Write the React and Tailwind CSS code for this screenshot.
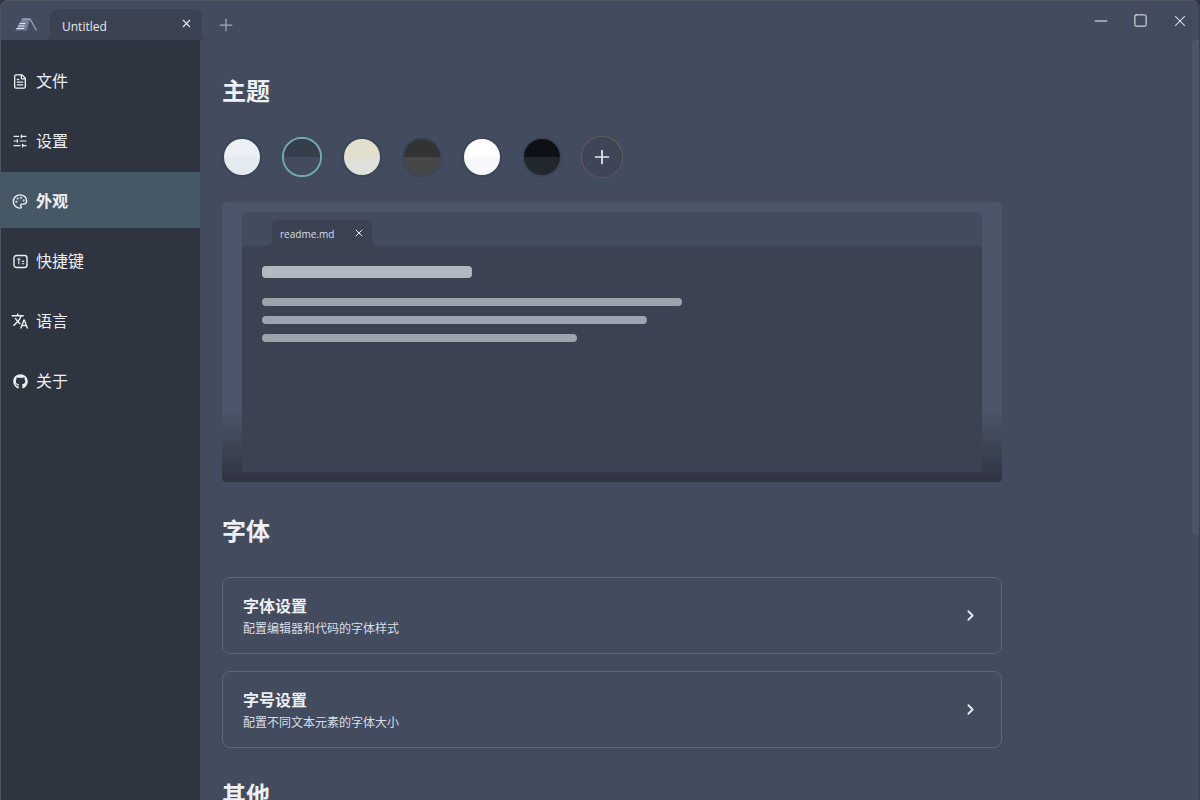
import React from 'react';
import { FileText, SlidersHorizontal, Palette, ChevronRight, X, Plus, Minus, Square } from 'lucide-react';
import { FaGithub } from 'react-icons/fa';
import { MdTranslate } from 'react-icons/md';

const cjk = "font-['Open_Sans','Noto_Sans_CJK_SC',sans-serif]";

function ShortcutIcon() {
  return (
    <svg width="15" height="15" viewBox="0 0 15 15" fill="none" stroke="currentColor" strokeWidth="1.4" className="shrink-0">
      <rect x="1" y="1.5" width="13" height="12" rx="2.5" />
      <path d="M4 5h3.6M5.8 5v5.2M8.8 7.4h2.4M8.8 9.8h2.4" strokeWidth="1.1" />
    </svg>
  );
}

const navItems = [
  { label: '文件', icon: <FileText size={17} strokeWidth={2} /> },
  { label: '设置', icon: <SlidersHorizontal size={18} strokeWidth={1.8} /> },
  { label: '外观', icon: <Palette size={17} strokeWidth={2.1} />, active: true },
  { label: '快捷键', icon: <ShortcutIcon /> },
  { label: '语言', icon: <MdTranslate size={18} className="shrink-0" /> },
  { label: '关于', icon: <FaGithub size={15} className="shrink-0" /> },
];

const themes = [
  { top: 'bg-[#eceff4]', bottom: 'bg-[#e5e9f0]', ring: 'border-[#3a4558]' },
  { top: 'bg-[#363d4b]', bottom: 'bg-[#434c5e]', ring: 'border-[#75a9b4]' },
  { top: 'bg-[#e0e0cc]', bottom: 'bg-[#e0e0da]', ring: 'border-[#3a4558]' },
  { top: 'bg-[#333333]', bottom: 'bg-[#474747]', ring: 'border-[#3a4558]' },
  { top: 'bg-[#ffffff]', bottom: 'bg-[#f6f8fa]', ring: 'border-[#3a4558]' },
  { top: 'bg-[#0d1117]', bottom: 'bg-[#22272e]', ring: 'border-[#3a4558]' },
];

function Heading({ children, className }) {
  return <h2 className={`text-2xl font-bold leading-8 text-[#eceff4] ${className}`}>{children}</h2>;
}

function SettingCard({ title, desc }) {
  return (
    <div className="flex h-[77px] items-center justify-between rounded-lg border border-[#5a6680] pl-5 pr-[22px]">
      <div className="mt-[2px]">
        <div className="text-base leading-5 font-bold text-[#eceff4]">{title}</div>
        <div className="mt-[5px] text-xs leading-4 text-[#d8dee9]">{desc}</div>
      </div>
      <ChevronRight size={17} strokeWidth={2.6} className="text-[#e5e9f0]" />
    </div>
  );
}

// concave foot on either side of a tab
function TabFlares() {
  return (
    <>
      <span className="absolute bottom-0 left-[-6px] h-[6px] w-[6px] bg-[radial-gradient(circle_at_0_0,transparent_6px,#3b4252_6.5px)]" />
      <span className="absolute bottom-0 right-[-6px] h-[6px] w-[6px] bg-[radial-gradient(circle_at_100%_0,transparent_6px,#3b4252_6.5px)]" />
    </>
  );
}

export default function App() {
  return (
    <div className="h-screen bg-[#30343c]">
      <div className={`flex h-full flex-col overflow-hidden rounded-t-lg border-t border-r border-l border-[#4f5561] border-r-[#3a404d] bg-[#434c5e] ${cjk}`}>
        <div className="flex h-[39px] shrink-0 items-end">
          <div className="flex h-[39px] w-[49px] items-center justify-center">
            <svg width="24" height="14" viewBox="0 0 24 14" fill="none" className="mt-[8px] ml-[1px]">
              <path d="M8 1 1 12.5h11.5L16 1z" fill="#8fa3bf" opacity="0.6" />
              <path d="M5.5 5.5h6M4 8h6.5M2.5 10.5h7.5" stroke="#dfe6f0" strokeWidth="1.1" />
              <path d="M8 1h8l6.5 11.5" stroke="#8fa3bf" strokeWidth="1.3" />
            </svg>
          </div>
          <div className="relative flex h-[31px] w-[152px] items-center justify-between rounded-t-lg bg-[#3b4252] pl-3 pr-[9px] text-xs text-[#e5e9f0]">
            <TabFlares />
            <span className="pt-1">Untitled</span>
            <X size={13} strokeWidth={2} className="mt-[-2px] text-[#e5e9f0]" />
          </div>
          <div className="flex h-[39px] w-12 items-center justify-center">
            <Plus size={20} strokeWidth={1.5} className="mt-[9px] text-[#a3abb9]" />
          </div>
          <div className="flex-1" />
          <div className="flex h-[39px] items-center gap-[20px] pr-[10px] text-[#eef1f6]">
            <Minus size={20} strokeWidth={1.2} />
            <Square size={15} strokeWidth={1.6} className="mx-[2px]" />
            <X size={18} strokeWidth={1.4} className="ml-[1px]" />
          </div>
        </div>

        <div className="flex min-h-0 flex-1">
          <aside className="flex w-[199px] shrink-0 flex-col gap-1 bg-[#2e3440] pt-3">
            {navItems.map((item) => (
              <div
                key={item.label}
                className={`flex h-14 items-center gap-2 pl-[11px] pt-[2px] text-base text-[#eceff4] ${item.active ? 'bg-[#465865] font-bold' : ''}`}
              >
                <span className="flex w-4 justify-center">{item.icon}</span>
                <span>{item.label}</span>
              </div>
            ))}
          </aside>

          <main className="relative min-w-0 flex-1 overflow-hidden pl-[22px] pt-[35px]">
            <div className="w-[780px]">
              <Heading>主题</Heading>
              <div className="mt-[30px] flex gap-5">
                {themes.map((t, i) => (
                  <div key={i} className={`flex h-10 w-10 flex-col overflow-hidden rounded-full border-2 ${t.ring}`}>
                    <div className={`flex-1 ${t.top}`} />
                    <div className={`flex-1 ${t.bottom}`} />
                  </div>
                ))}
                <div className="m-[-1px] h-[42px] w-[42px] rounded-full bg-[conic-gradient(#5f5e58,#66664f,#50566a,#5a5268,#6a5670,#685468,#5f5e58)] p-[1px]">
                  <div className="flex h-full w-full items-center justify-center rounded-full border border-[#3b4252] bg-[#3f4556] text-[#e5e9f0]">
                    <Plus size={22} strokeWidth={1.9} />
                  </div>
                </div>
              </div>

              <div className="relative mt-[25px] h-[280px] overflow-hidden rounded bg-[#4c566a] px-5 pt-[10px]">
                <div className="relative z-10 h-[260px] rounded bg-[#434c5e]">
                  <div className="flex h-[34px] items-end pl-[30px]">
                    <div className="relative flex h-[26px] w-[100px] items-center justify-between rounded-t-md bg-[#3b4252] pl-[8px] pr-[7px] text-[10px] text-[#d8dee9]">
                      <TabFlares />
                      <span className="pt-[2px]">readme.md</span>
                      <X size={12} strokeWidth={2} className="text-[#e5e9f0]" />
                    </div>
                  </div>
                  <div className="h-[226px] rounded-b bg-[#3b4252] pl-5 pt-5">
                    <div className="h-3 w-[210px] rounded bg-[#b4b8c2]" />
                    <div className="mt-5 h-2 w-[420px] rounded bg-[#9fa3ad]" />
                    <div className="mt-[10px] h-2 w-[385px] rounded bg-[#9fa3ad]" />
                    <div className="mt-[10px] h-2 w-[315px] rounded bg-[#9fa3ad]" />
                  </div>
                </div>
                <div className="absolute inset-x-0 bottom-0 h-[72px] bg-gradient-to-b from-[#4c566a] to-[#2e3440]" />
              </div>

              <Heading className="mt-[33px]">字体</Heading>
              <div className="mt-[30px] flex flex-col gap-[17px]">
                <SettingCard title="字体设置" desc="配置编辑器和代码的字体样式" />
                <SettingCard title="字号设置" desc="配置不同文本元素的字体大小" />
              </div>
              <Heading className="mt-[31px]">其他</Heading>
            </div>
            <div className="absolute top-0 right-0 h-[495px] w-[7px] rounded-l-[4px] bg-[#4c566a]" />
          </main>
        </div>
      </div>
    </div>
  );
}
